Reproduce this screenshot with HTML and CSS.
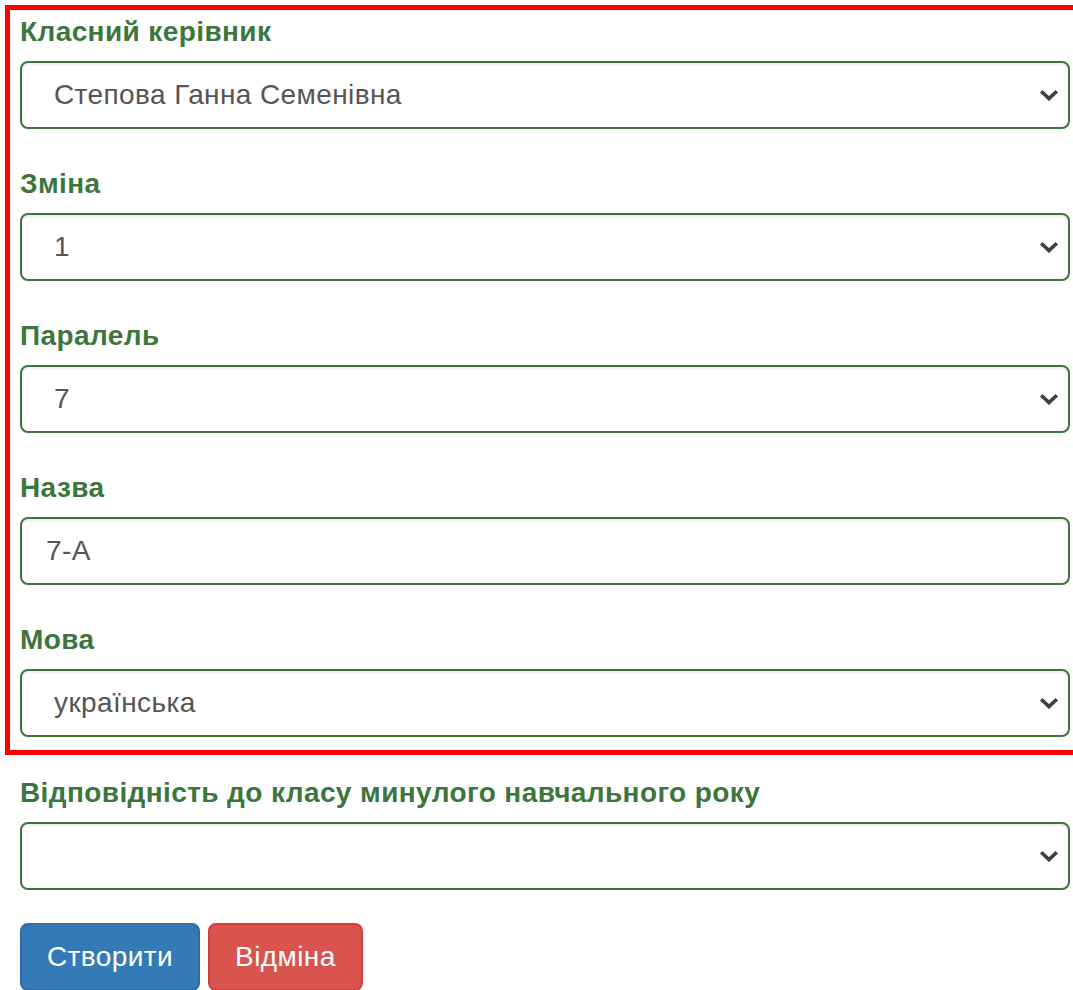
FILE: index.html
```html
<!DOCTYPE html>
<html lang="uk">
<head>
<meta charset="utf-8">
<title>Клас</title>
<link rel="stylesheet" href="styles.css">
</head>
<body>
<form class="class-form">
  <div class="highlight">
    <div class="form-group">
      <label class="control-label">Класний керівник</label>
      <select class="form-control select">
        <option>Степова Ганна Семенівна</option>
      </select>
    </div>
    <div class="form-group">
      <label class="control-label">Зміна</label>
      <select class="form-control select">
        <option>1</option>
      </select>
    </div>
    <div class="form-group">
      <label class="control-label">Паралель</label>
      <select class="form-control select">
        <option>7</option>
      </select>
    </div>
    <div class="form-group">
      <label class="control-label">Назва</label>
      <input class="form-control" type="text" value="7-А">
    </div>
    <div class="form-group">
      <label class="control-label">Мова</label>
      <select class="form-control select">
        <option>українська</option>
      </select>
    </div>
  </div>
  <div class="rest">
    <div class="form-group">
      <label class="control-label">Відповідність до класу минулого навчального року</label>
      <select class="form-control select">
        <option></option>
      </select>
    </div>
    <div class="actions">
      <button type="button" class="btn btn-primary">Створити</button>
      <button type="button" class="btn btn-danger">Відміна</button>
    </div>
  </div>
</form>
</body>
</html>
```
FILE: styles.css
```css
html, body {
  margin: 0;
  overflow: hidden;
  background: #fff;
}

body {
  font-family: "Liberation Sans", Arial, sans-serif;
  font-size: 28px;
  line-height: 40px;
  letter-spacing: 0.4px;
  color: #333;
}

*, *::before, *::after {
  box-sizing: border-box;
}

.class-form {
  padding: 5px 0 0 5px;
  width: 1085px;
}

.highlight {
  border: 5px solid #ff0000;
  padding: 1px 10px 13px;
}

.rest {
  padding: 17px 0 0 15px;
}

.form-group {
  width: 1050px;
  display: flex;
  flex-direction: column;
}

.highlight .form-group + .form-group {
  margin-top: 34px;
}

.control-label {
  display: block;
  font-weight: bold;
  color: #3c763d;
  margin-top: 1px;
  margin-bottom: 9px;
}

.form-control {
  display: block;
  width: 100%;
  height: 68px;
  margin: 0;
  padding: 12px 24px;
  font-family: inherit;
  font-size: 28px;
  line-height: 40px;
  letter-spacing: inherit;
  color: #555;
  background-color: #fff;
  border: 2px solid #3c763d;
  border-radius: 8px;
  box-shadow: inset 0 2px 2px rgba(0, 0, 0, 0.075);
  outline: none;
}

.select {
  -webkit-appearance: none;
  appearance: none;
  padding-left: 32px;
  background-image: url("data:image/svg+xml,%3Csvg xmlns='http://www.w3.org/2000/svg' viewBox='0 0 20 12'%3E%3Cpath d='M2.2 2.2 L10 9.6 L17.8 2.2' fill='none' stroke='%23404040' stroke-width='3.6' stroke-linecap='butt' stroke-linejoin='miter'/%3E%3C/svg%3E");
  background-repeat: no-repeat;
  background-position: right 9px center;
  background-size: 20px 12px;
}

.actions {
  display: flex;
  gap: 8px;
  margin-top: 33px;
}

.btn {
  display: inline-block;
  height: 68px;
  padding: 12px 25px;
  font-family: inherit;
  font-size: 28px;
  line-height: 40px;
  letter-spacing: inherit;
  color: #fff;
  border: 2px solid transparent;
  border-radius: 8px;
  cursor: pointer;
}

.btn-primary {
  background-color: #337ab7;
  border-color: #2e6da4;
}

.btn-danger {
  background-color: #d9534f;
  border-color: #d43f3a;
}
```
